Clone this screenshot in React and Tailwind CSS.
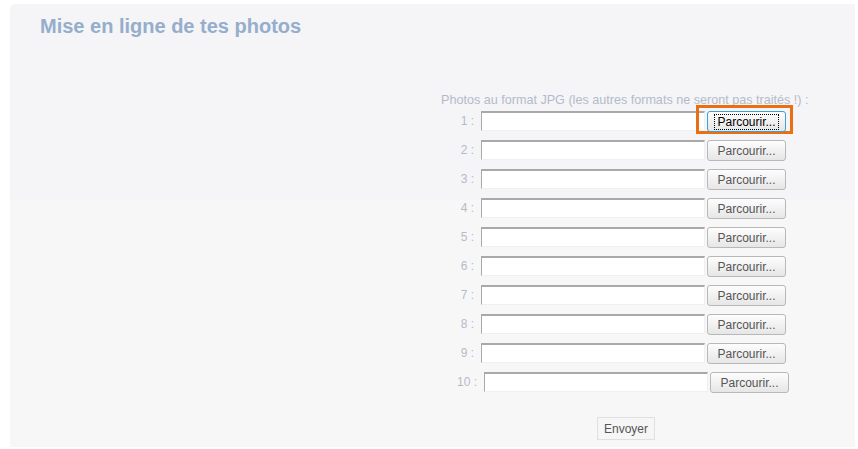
import React from "react";

const rows = [1, 2, 3, 4, 5, 6, 7, 8, 9, 10];

const FileRow = ({ n }) => {
    const focused = n === 1;
    return (
        <div className={`flex items-center h-[29px] ${n === 10 ? "pl-[3px]" : ""}`}>
            <span className="w-[40px] pr-[7px] text-right text-[12px] text-[#b3bbcb]">
                {n} :
            </span>
            <div className="w-[224px] h-[20px] bg-white border-t-2 border-l border-[#a9a9a9] border-r border-b border-r-[#f0f0f0] border-b-[#f0f0f0]" />
            <div className="relative ml-[2px]">
                {focused && (
                    <div className="absolute -left-[11px] -top-[4px] w-[97px] h-[29px] border-[3px] border-[#ea6e12]" />
                )}
                <button
                    className={`relative w-[79px] h-[21px] rounded-[3px] text-[12px] bg-[linear-gradient(to_bottom,#fdfdfd,#e6e6e6)] ${
                        focused
                            ? "border border-[#3c9fd6] text-black"
                            : "border border-[#b8b8b8] text-[#555]"
                    }`}
                >
                    {focused ? (
                        <span className="px-[2px] border border-dotted border-black">Parcourir...</span>
                    ) : (
                        "Parcourir..."
                    )}
                </button>
            </div>
        </div>
    );
};

const App = () => {
    return (
        <div className="w-[858px] h-[449px] bg-white pt-[4px] pl-[10px] pr-[3px] pb-[2px] font-['Liberation_Sans',sans-serif]">
            <div className="h-full rounded-tl-[5px] bg-[linear-gradient(to_bottom,#f5f4f7_0,#f5f4f7_196px,#f8f7f8_196px)] pl-[30px] pt-[10px]">
                <h1 className="text-[20px] font-bold text-[#94aecb] leading-[24px]">
                    Mise en ligne de tes photos
                </h1>

                <div className="ml-[401px] mt-[55px] w-[380px]">
                    <p className="text-[12.6px] text-[#b3bbcb] leading-[14px]">
                        Photos au format JPG (les autres formats ne seront pas traités !) :
                    </p>
                    <div className="-mt-[1px]">
                        {rows.map((n) => (
                            <FileRow key={n} n={n} />
                        ))}
                    </div>
                    <div className="flex justify-center mt-[21px]">
                        <button className="ml-[-10px] h-[23px] px-[6px] text-[12px] text-[#555] bg-[#f6f6f6] border border-[#e0e0e0]">
                            Envoyer
                        </button>
                    </div>
                </div>
            </div>
        </div>
    );
};

export default App;
